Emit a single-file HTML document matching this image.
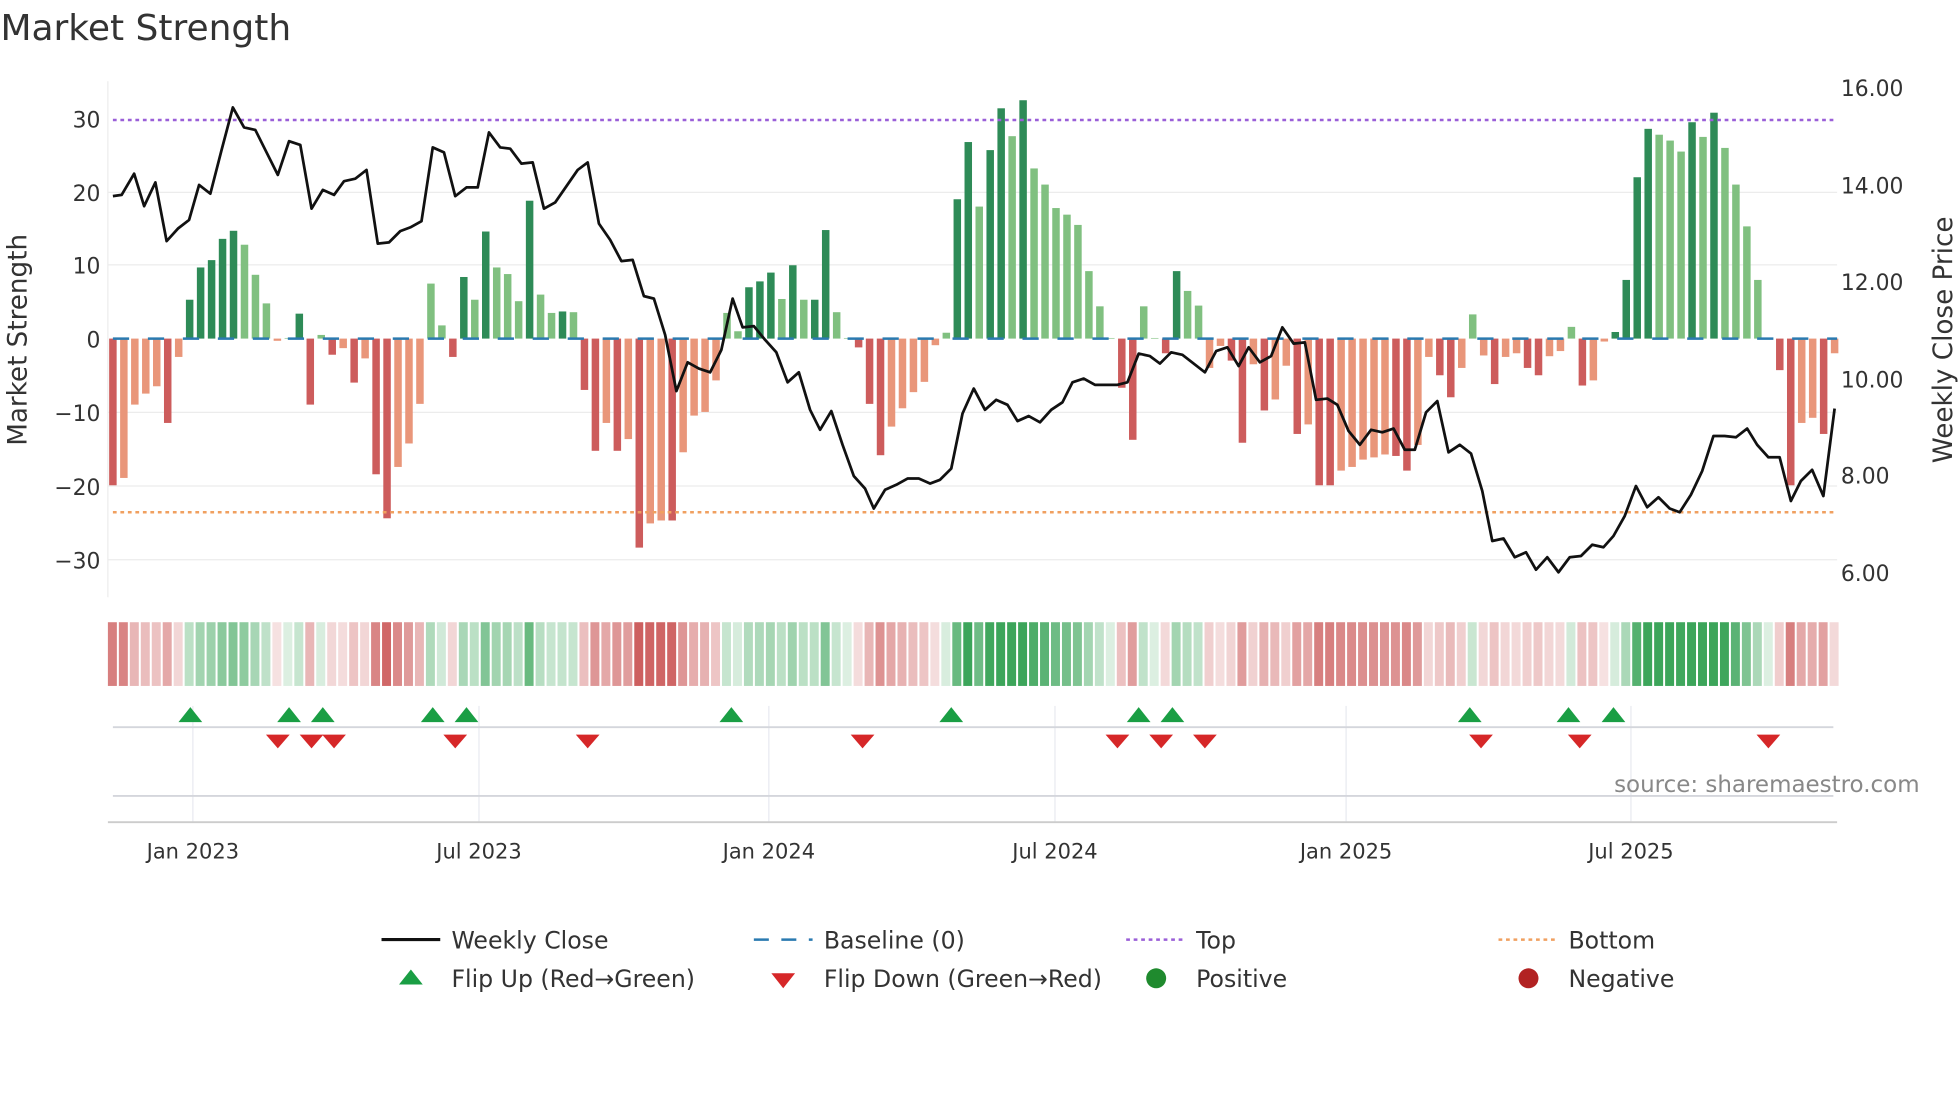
<!DOCTYPE html>
<html><head><meta charset="utf-8"><style>
html,body{margin:0;padding:0;background:#fff;overflow:hidden}
svg{display:block}
text{font-family:"DejaVu Sans","Liberation Sans",sans-serif;}
</style></head><body>
<svg id="s" width="1960" height="1102" viewBox="0 0 1568 882" xmlns="http://www.w3.org/2000/svg">
<rect width="1568" height="882" fill="#fff"/>
<text x="0" y="32" font-size="28.8" fill="#333">Market Strength</text>
<g id="grid" stroke="#ececec" stroke-width="1">
<line x1="86" x2="1470" y1="154" y2="154"/><line x1="86" x2="1470" y1="212" y2="212"/>
<line x1="86" x2="1470" y1="330" y2="330"/><line x1="86" x2="1470" y1="389" y2="389"/>
<line x1="86" x2="1470" y1="448" y2="448"/>
</g>
<line x1="86" x2="86" y1="65" y2="478" stroke="#ececec"/>
<g font-size="17.5" fill="#333" text-anchor="end">
<text x="80" y="102">30</text><text x="80" y="161">20</text><text x="80" y="219">10</text>
<text x="80" y="278">0</text><text x="80" y="337">−10</text><text x="80" y="396">−20</text><text x="80" y="455">−30</text>
</g>
<g font-size="17.5" fill="#333">
<text x="1473" y="77">16.00</text><text x="1473" y="155">14.00</text><text x="1473" y="232">12.00</text>
<text x="1473" y="310">10.00</text><text x="1473" y="387">8.00</text><text x="1473" y="465">6.00</text>
</g>
<text transform="translate(21,272) rotate(-90)" font-size="21" fill="#333" text-anchor="middle">Market Strength</text>
<text transform="translate(1562,272) rotate(-90)" font-size="21" fill="#333" text-anchor="middle">Weekly Close Price</text>
<g id="bars"></g>
<line x1="90" x2="1470" y1="96" y2="96" stroke="#9a5fd8" stroke-width="2" stroke-dasharray="3,3"/>
<line x1="90" x2="1470" y1="410" y2="410" stroke="#f0a060" stroke-width="2" stroke-dasharray="3,3"/>
<line x1="90" x2="1470" y1="271" y2="271" stroke="#2a7ab0" stroke-width="2" stroke-dasharray="13,15"/>
<polyline id="price" fill="none" stroke="#111" stroke-width="2.2" stroke-linejoin="round"/>
<g id="heat"></g>
<g stroke="#e8eaf0" stroke-width="1">
<line x1="154" x2="154" y1="565" y2="658"/><line x1="383" x2="383" y1="565" y2="658"/>
<line x1="615" x2="615" y1="565" y2="658"/><line x1="844" x2="844" y1="565" y2="658"/>
<line x1="1077" x2="1077" y1="565" y2="658"/><line x1="1305" x2="1305" y1="565" y2="658"/>
</g>
<line x1="90" x2="1467" y1="582" y2="582" stroke="#d4d6dc" stroke-width="1.5"/>
<line x1="90" x2="1467" y1="637" y2="637" stroke="#d4d6dc" stroke-width="1.5"/>
<line x1="86" x2="1470" y1="658" y2="658" stroke="#ccc" stroke-width="1.5"/>
<g id="flips"></g>
<text x="1536" y="634" font-size="18.4" fill="#888" text-anchor="end">source: sharemaestro.com</text>
<g font-size="16.8" fill="#333" text-anchor="middle">
<text x="154" y="687">Jan 2023</text><text x="383" y="687">Jul 2023</text><text x="615" y="687">Jan 2024</text>
<text x="844" y="687">Jul 2024</text><text x="1077" y="687">Jan 2025</text><text x="1305" y="687">Jul 2025</text>
</g>
<g font-size="18.9" fill="#333">
<line x1="305" x2="352" y1="752" y2="752" stroke="#111" stroke-width="2.5"/><text x="361" y="759">Weekly Close</text>
<line x1="603" x2="650" y1="752" y2="752" stroke="#2a7ab0" stroke-width="2" stroke-dasharray="12,10"/><text x="659" y="759">Baseline (0)</text>
<line x1="901" x2="948" y1="752" y2="752" stroke="#9a5fd8" stroke-width="2" stroke-dasharray="3,3"/><text x="957" y="759">Top</text>
<line x1="1199" x2="1246" y1="752" y2="752" stroke="#f0a060" stroke-width="2" stroke-dasharray="3,3"/><text x="1255" y="759">Bottom</text>
<polygon points="319,788 338,788 328.5,776" fill="#1a9e44"/><text x="361" y="790">Flip Up (Red→Green)</text>
<polygon points="617,779 636,779 626.5,791" fill="#d62728"/><text x="659" y="790">Flip Down (Green→Red)</text>
<circle cx="925" cy="783" r="8" fill="#1f8a2e"/><text x="957" y="790">Positive</text>
<circle cx="1223" cy="783" r="8" fill="#b22222"/><text x="1255" y="790">Negative</text>
</g>
</svg>
<script>
var V=[-20,-19,-9,-7.5,-6.5,-11.5,-2.5,5.3,9.7,10.7,13.6,14.7,12.8,8.7,4.8,-0.3,0,3.4,-9,0.5,-2.2,-1.3,-6,-2.7,-18.5,-24.5,-17.5,-14.3,-8.9,7.5,1.8,-2.5,8.4,5.3,14.6,9.7,8.8,5.1,18.8,6,3.5,3.7,3.6,-7,-15.3,-11.5,-15.3,-13.7,-28.5,-25.2,-24.8,-24.8,-15.5,-10.5,-10,-5.7,3.5,1,7,7.8,9,5.4,10,5.3,5.3,14.8,3.6,0,-1.2,-8.9,-15.9,-12,-9.5,-7.3,-5.9,-0.9,0.8,19,26.8,18,25.7,31.4,27.6,32.5,23.2,21,17.8,16.9,15.5,9.2,4.4,0,-6.7,-13.8,4.4,0,-2,9.2,6.5,4.5,-4,-1,-3,-14.2,-3.5,-9.8,-8.3,-3.7,-13,-11.7,-20,-20,-18,-17.5,-16.5,-16.2,-15.8,-16,-18,-14.5,-2.5,-5,-8,-4,3.3,-2.3,-6.2,-2.5,-2,-4,-5,-2.4,-1.7,1.6,-6.4,-5.7,-0.4,0.9,8,22,28.6,27.8,27,25.5,29.5,27.5,30.8,26,21,15.3,8,0,-4.3,-20,-11.5,-10.8,-13,-2];
var n=V.length,x0=90,x1=1468,st=(x1-x0)/(n-1),ns="http://www.w3.org/2000/svg";
function el(t,a,p){var e=document.createElementNS(ns,t);for(var k in a)e.setAttribute(k,a[k]);p.appendChild(e);return e;}
var bars=document.getElementById('bars'),heat=document.getElementById('heat');
for(var i=0;i<n;i++){var v=V[i],x=x0+i*st,prev=i?V[i-1]:0;
 var strong=Math.abs(v)>=Math.abs(prev);
 var c=v>=0?(strong?'#2e8b57':'#80c080'):(strong?'#cd5c5c':'#e9967a');
 var h=Math.abs(v)*5.87;if(h<0.5)h=0.5;
 el('rect',{x:x-3,y:v>=0?271-h:271,width:6,height:h,fill:c},bars);
 var a=Math.min(1,0.18+Math.abs(v)/32);
 var hc=v>=0?'rgba(60,165,90,'+a.toFixed(2)+')':'rgba(205,95,95,'+a.toFixed(2)+')';
 el('rect',{x:x-4,y:498,width:st-1.6,height:51,fill:hc},heat);
}
var P=[[90,157],[97,156],[107,139],[115,165],[124,146],[133,193],[142,183],[151,176],[159,148],[168,155],[177,120],[186,86],[195,102],[204,104],[213,122],[222,140],[231,113],[240,116],[249,167],[258,152],[267,156],[275,145],[284,143],[293,136],[302,195],[311,194],[320,185],[328,182],[337,177],[346,118],[355,122],[364,157],[373,150],[382,150],[391,106],[400,118],[408,119],[417,131],[426,130],[435,167],[444,162],[453,149],[462,136],[470,130],[479,179],[488,192],[497,209],[506,208],[515,237],[523,239],[532,268],[541,313],[550,290],[559,295],[568,298],[577,280],[586,239],[594,262],[603,261],[612,272],[621,282],[630,306],[639,298],[648,328],[656,344],[665,329],[674,356],[683,381],[692,391],[699,407],[708,392],[717,388],[726,383],[735,383],[744,387],[752,384],[761,375],[770,331],[779,311],[788,328],[797,320],[806,324],[814,337],[823,333],[832,338],[841,328],[850,322],[858,306],[867,303],[876,308],[885,308],[894,308],[902,306],[911,283],[920,285],[928,291],[937,282],[946,284],[955,291],[964,298],[973,281],[982,278],[991,293],[999,278],[1008,290],[1017,285],[1026,262],[1035,275],[1044,274],[1053,320],[1062,319],[1070,324],[1079,345],[1088,356],[1097,344],[1106,346],[1115,343],[1124,360],[1132,360],[1141,330],[1150,321],[1159,362],[1168,356],[1177,363],[1186,393],[1194,433],[1203,431],[1212,446],[1221,442],[1229,456],[1238,446],[1247,458],[1256,446],[1265,445],[1274,436],[1283,438],[1291,429],[1300,413],[1309,389],[1318,406],[1327,398],[1336,407],[1344,410],[1353,396],[1362,377],[1371,349],[1380,349],[1389,350],[1398,343],[1406,356],[1415,366],[1424,366],[1433,401],[1441,385],[1450,376],[1459,397],[1468,327]];
document.getElementById('price').setAttribute('points',P.map(function(p){return p.join(',')}).join(' '));
var fl=document.getElementById('flips');
[152,231,258,346,373,585,761,911,938,1176,1255,1291].forEach(function(x){el('polygon',{points:(x-9.5)+',578 '+(x+9.5)+',578 '+x+',566',fill:'#1a9e44'},fl);});
[222,249,267,364,470,690,894,929,964,1185,1264,1415].forEach(function(x){el('polygon',{points:(x-9.5)+',588 '+(x+9.5)+',588 '+x+',599',fill:'#d62728'},fl);});
</script>
</body></html>
